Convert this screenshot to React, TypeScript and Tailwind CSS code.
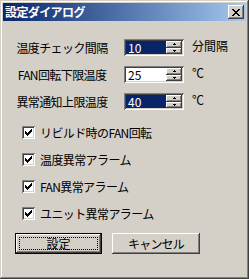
import type { ReactElement, ReactNode } from "react";

const raised =
  "shadow-[inset_-1px_-1px_#404040,inset_1px_1px_#ffffff,inset_-2px_-2px_#808080,inset_2px_2px_#d4d0c8]";
const sunken =
  "shadow-[inset_1px_1px_#808080,inset_-1px_-1px_#ffffff,inset_2px_2px_#404040,inset_-2px_-2px_#d4d0c8]";

function SpinHalf({ up }: { up: boolean }): ReactElement {
  return (
    <div className={`flex-1 flex items-center justify-center bg-[#d4d0c8] ${raised}`}>
      <svg width="3" height="2" viewBox="0 0 3 2">
        {up ? <path d="M1 0h1v1h1v1H0V1h1z" fill="#000" /> : <path d="M0 0h3v1H2v1H1V1H0z" fill="#000" />}
      </svg>
    </div>
  );
}

function Spinner({ value, selected }: { value: string; selected?: boolean }): ReactElement {
  return (
    <div className={`flex w-[60px] h-[17px] bg-white p-[2px] ${sunken}`}>
      <div
        className={`flex-1 flex items-center pl-[2px] text-[12px] leading-none ${
          selected ? "bg-[#0a246a] text-white" : "text-black"
        }`}
      >
        {value}
      </div>
      <div className="flex flex-col w-[16px]">
        <SpinHalf up />
        <SpinHalf up={false} />
      </div>
    </div>
  );
}

function Row({ label, value, unit, selected }: { label: string; value: string; unit: string; selected?: boolean }): ReactElement {
  return (
    <div className="flex items-center h-[17px]">
      <div className="w-[96px] ml-[11px] text-center text-[12px] leading-none tracking-[-0.6px] whitespace-nowrap">{label}</div>
      <div className="ml-[14px]">
        <Spinner value={value} selected={selected} />
      </div>
      <div className="ml-[8px] text-[12px] leading-none self-start mt-[1px]">{unit}</div>
    </div>
  );
}

function Check({ children }: { children: ReactNode }): ReactElement {
  return (
    <div className="flex items-center h-[13px] pl-[19px]">
      <div className={`w-[13px] h-[13px] bg-white flex items-center justify-center ${sunken}`}>
        <svg width="7" height="7" viewBox="0 0 7 7">
          <path d="M6 0h1v1H6zM5 1h1v1H5zM4 2h1v1H4zM3 3h1v1H3zM2 4h1v1H2zM1 3h1v1H1zM0 2h1v1H0z" fill="#000" />
          <path d="M6 1h1v1H6zM5 2h1v1H5zM4 3h1v1H4zM3 4h1v1H3zM2 5h1v1H2zM1 4h1v1H1zM0 3h1v1H0z" fill="#000" />
          <path d="M6 2h1v1H6zM5 3h1v1H5zM4 4h1v1H4zM3 5h1v1H3zM2 6h1v1H2zM1 5h1v1H1zM0 4h1v1H0z" fill="#000" />
        </svg>
      </div>
      <span className="ml-[5px] text-[12px] leading-none tracking-[-0.6px] whitespace-nowrap">{children}</span>
    </div>
  );
}

export default function App(): ReactElement {
  return (
    <div
      className={`w-[249px] h-[279px] bg-[#d4d0c8] p-[3px] flex flex-col text-black font-['Noto_Sans_CJK_JP','Liberation_Sans',sans-serif] shadow-[inset_-1px_-1px_#404040,inset_1px_1px_#d4d0c8,inset_-2px_-2px_#808080,inset_2px_2px_#ffffff]`}
    >
      {/* title bar */}
      <div className="h-[18px] flex items-center justify-between pl-[2px] pr-[2px] bg-linear-to-r from-[#0a246a] to-[#a6caf0]">
        <span className="text-white font-bold text-[12px] leading-none tracking-[-0.6px]">設定ダイアログ</span>
        <div className={`w-[16px] h-[14px] bg-[#d4d0c8] flex items-center justify-center ${raised}`}>
          <svg width="8" height="7" viewBox="0 0 8 7">
            <path d="M0 0h2v1h1v1h2V1h1V0h2v1H7v1H6v1H5v1h1v1h1v1h1v1H6V6H5V5H3v1H2v1H0V6h1V5h1V4h1V3H2V2H1V1H0z" fill="#000" />
          </svg>
        </div>
      </div>

      <div className="flex flex-col gap-[10px] mt-[18px]">
        <Row label="温度チェック間隔" value="10" unit="分間隔" selected />
        <Row label="FAN回転下限温度" value="25" unit="℃" />
        <Row label="異常通知上限温度" value="40" unit="℃" selected />
      </div>

      <div className="flex flex-col gap-[14px] mt-[16px]">
        <Check>リビルド時のFAN回転</Check>
        <Check>温度異常アラーム</Check>
        <Check>FAN異常アラーム</Check>
        <Check>ユニット異常アラーム</Check>
      </div>

      <div className="flex gap-[10px] mt-[13px] pl-[12px]">
        <div className="w-[87px] h-[21px] border border-black bg-[#d4d0c8]">
          <div className={`w-full h-full p-[3px] ${raised}`}>
            <div className="w-full h-full border border-dotted border-black flex items-center justify-center text-[12px] leading-none">
              設定
            </div>
          </div>
        </div>
        <div className={`w-[88px] h-[21px] flex items-center justify-center text-[12px] leading-none tracking-[-0.8px] ${raised}`}>
          キャンセル
        </div>
      </div>
    </div>
  );
}
